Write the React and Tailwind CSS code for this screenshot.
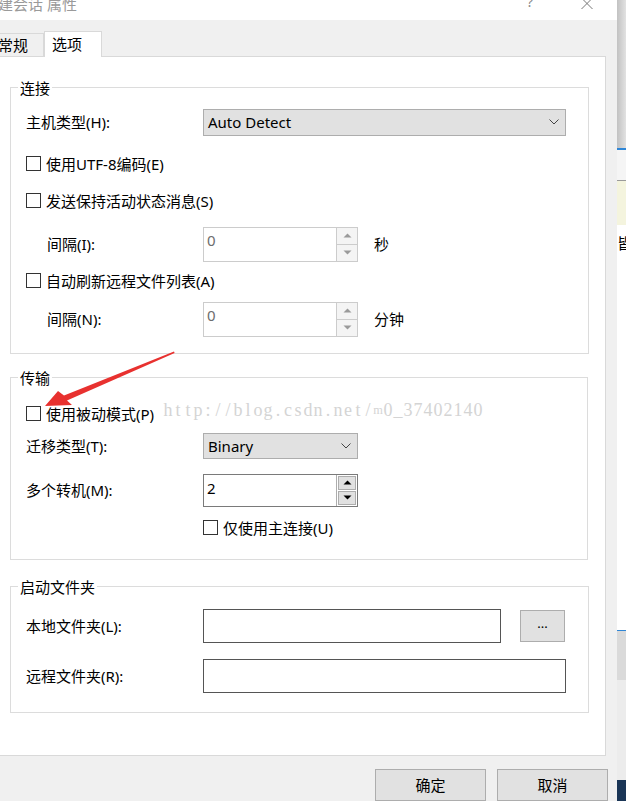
import React from "react";

const WATERMARK = "http://blog.csdn.net/m0_37402140";

const Checkbox = ({ label, className = "" }) => (
  <div className={"flex items-center h-[20px] gap-[5px] " + className}>
    <div className="w-[15px] h-[15px] border border-[#333333] bg-white shrink-0" />
    <span>{label}</span>
  </div>
);

const Chevron = () => (
  <svg width="10" height="6" viewBox="0 0 10 6" className="shrink-0">
    <polyline points="0.5,0.5 5,5 9.5,0.5" fill="none" stroke="#444" strokeWidth="1" />
  </svg>
);

const Select = ({ value, className }) => (
  <div className={"flex items-center justify-between bg-[#e1e1e1] border border-[#adadad] pl-[4px] pr-[6px] " + className}>
    <span>{value}</span>
    <Chevron />
  </div>
);

const Arrow = ({ up, color }) => (
  <svg width="9" height="5" viewBox="0 0 9 5">
    {up ? <polygon points="0.5,4.5 4.5,0.5 8.5,4.5" fill={color} /> : <polygon points="0.5,0.5 4.5,4.5 8.5,0.5" fill={color} />}
  </svg>
);

const Spin = ({ value, disabled, className }) => (
  <div
    className={
      disabled
        ? "w-[155px] flex border border-[#cccccc] bg-white " + className
        : "w-[155px] flex border border-[#7a7a7a] bg-white " + className
    }
  >
    <div className={disabled ? "flex-1 pl-[3px] pt-[2px] leading-[20px] text-[#6d6d6d]" : "flex-1 pl-[3px] pt-[3px] leading-[20px] text-black"}>
      {value}
    </div>
    <div className={disabled ? "w-[21px] flex flex-col border-l border-[#cccccc]" : "w-[21px] flex flex-col gap-px p-px border-l border-[#adadad] bg-white"}>
      <div className={disabled ? "flex-1 flex items-center justify-center bg-[#f4f4f4] border-b border-[#cccccc]" : "flex-1 flex items-center justify-center bg-[#e1e1e1] border border-[#adadad]"}>
        <Arrow up color={disabled ? "#9a9a9a" : "#000"} />
      </div>
      <div className={disabled ? "flex-1 flex items-center justify-center bg-[#f4f4f4]" : "flex-1 flex items-center justify-center bg-[#e1e1e1] border border-[#adadad]"}>
        <Arrow color={disabled ? "#9a9a9a" : "#000"} />
      </div>
    </div>
  </div>
);

const Group = ({ title, className = "", children }) => (
  <fieldset className={"w-[578px] border border-[#dcdcdc] " + className}>
    <legend className="ml-[7px] px-[2px] leading-[20px]">{title}</legend>
    <div className="pl-[15px] pr-[22px]">{children}</div>
  </fieldset>
);

const Row = ({ label, indent, className = "", children }) => (
  <div className={"flex items-center " + className}>
    <div className={indent ? "w-[177px] pl-[21px]" : "w-[177px]"}>{label}</div>
    {children}
  </div>
);

export default function App() {
  return (
    <div className="relative w-[626px] h-[801px] overflow-hidden flex bg-white text-[15px] text-black font-['Noto_Sans','Noto_Sans_CJK_SC',sans-serif]">
      {/* dialog */}
      <div className="w-[617px] flex flex-col bg-[#f0f0f0]">
        {/* title bar */}
        <div className="h-[20px] bg-white flex items-start overflow-hidden pr-[24px]">
          <span className="mt-[-6px] ml-[-2px] leading-[20px] text-[#9a9a9a]">建会话 属性</span>
          <span className="flex-1" />
          <span className="mt-[-8px] leading-[20px] text-[14px] text-[#8a8a8a]">?</span>
          <svg width="12" height="11" viewBox="0 0 12 11" className="ml-[48px] mt-[-2px]">
            <line x1="0.5" y1="0" x2="11.5" y2="11" stroke="#777" strokeWidth="1" />
            <line x1="11.5" y1="0" x2="0.5" y2="11" stroke="#777" strokeWidth="1" />
          </svg>
        </div>

        {/* tabs */}
        <div className="w-[606px] h-[37px] flex items-end">
          <div className="w-[44px] h-[24px] flex items-center border-t border-r border-b border-[#d9d9d9]">
            <span className="ml-[-2px]">常规</span>
          </div>
          <div className="w-[58px] h-[26px] flex items-center pl-[7px] bg-white border-l border-t border-r border-[#d9d9d9]">
            选项
          </div>
          <div className="flex-1 h-full border-b border-[#d9d9d9]" />
        </div>

        {/* tab panel */}
        <div className="w-[606px] h-[702px] bg-white border-r border-b border-[#d9d9d9] pl-[10px] pt-[21px]">
          <Group title="连接">
            <Row label="主机类型(H):" className="mt-[11px]">
              <Select value="Auto Detect" className="w-[363px] h-[27px]" />
            </Row>
            <Checkbox label="使用UTF-8编码(E)" className="mt-[18px]" />
            <Checkbox label="发送保持活动状态消息(S)" className="mt-[17px]" />
            <Row label="间隔(I):" indent className="mt-[16px]">
              <Spin value="0" disabled className="h-[35px]" />
              <span className="ml-[16px]">秒</span>
            </Row>
            <Checkbox label="自动刷新远程文件列表(A)" className="mt-[9px]" />
            <Row label="间隔(N):" indent className="mt-[11px] mb-[16px]">
              <Spin value="0" disabled className="h-[35px]" />
              <span className="ml-[16px]">分钟</span>
            </Row>
          </Group>

          <Group title="传输" className="mt-[14px]">
            <Checkbox label="使用被动模式(P)" className="mt-[16px]" />
            <Row label="迁移类型(T):" className="mt-[9px]">
              <Select value="Binary" className="w-[155px] h-[26px]" />
            </Row>
            <Row label="多个转机(M):" className="mt-[15px]">
              <Spin value="2" className="h-[33px]" />
            </Row>
            <Checkbox label="仅使用主连接(U)" className="mt-[11px] mb-[21px] ml-[177px]" />
          </Group>

          <Group title="启动文件夹" className="mt-[17px]">
            <Row label="本地文件夹(L):" className="mt-[12px]">
              <div className="w-[298px] h-[34px] border border-[#555555] bg-white" />
              <div className="ml-[19px] w-[45px] h-[32px] flex items-center justify-center bg-[#e1e1e1] border border-[#adadad] text-[13px] leading-none pb-[4px]">
                ...
              </div>
            </Row>
            <Row label="远程文件夹(R):" className="mt-[16px] mb-[19px]">
              <div className="w-[363px] h-[34px] border border-[#555555] bg-white" />
            </Row>
          </Group>
        </div>

        {/* buttons */}
        <div className="flex justify-end gap-[11px] pr-[9px] pt-[13px]">
          <div className="w-[111px] h-[32px] flex items-center justify-center bg-[#e1e1e1] border border-[#adadad]">确定</div>
          <div className="w-[111px] h-[32px] flex items-center justify-center bg-[#e1e1e1] border border-[#adadad]">取消</div>
        </div>
      </div>

      {/* background window strip */}
      <div className="w-[9px] flex flex-col">
        <div className="h-[148px] bg-gradient-to-r from-[#c2c2c2] to-[#e2e2e2]" />
        <div className="h-[2px] bg-[#2f86d6]" />
        <div className="h-[30px] bg-[#f5f5f5]" />
        <div className="h-px bg-[#9a9a9a]" />
        <div className="h-[44px] bg-[#f4f4de]" />
        <div className="h-[10px] bg-white" />
        <div className="h-[17px] overflow-hidden leading-[17px] text-[15px] bg-white">皆</div>
        <div className="h-[378px] bg-white" />
        <div className="h-px bg-[#2f86d6]" />
        <div className="h-[49px] bg-[#dadada]" />
        <div className="h-[100px] bg-[#ececec]" />
        <div className="h-[21px] bg-[#1a3556]" />
      </div>

      {/* watermark: half-width serif characters, 10px each */}
      <div className="absolute left-[163px] top-[398px] flex leading-[24px] text-[18px] text-[#d4d4d4] font-['Liberation_Serif',serif] pointer-events-none">
        {WATERMARK.split("").map((ch, i) => (
          <span key={i} className={ch === "m" ? "w-[10px] text-center text-[13px] scale-x-[0.95] origin-center" : "w-[10px] text-center"}>
            {ch}
          </span>
        ))}
      </div>

      {/* annotation arrow */}
      <svg className="absolute left-0 top-0 pointer-events-none" width="626" height="801" viewBox="0 0 626 801">
        <polygon
          points="45,406 58,391 64,395.5 174,351.5 174.6,353 67,400.5 72,405"
          fill="#e8312f"
        />
      </svg>
    </div>
  );
}
